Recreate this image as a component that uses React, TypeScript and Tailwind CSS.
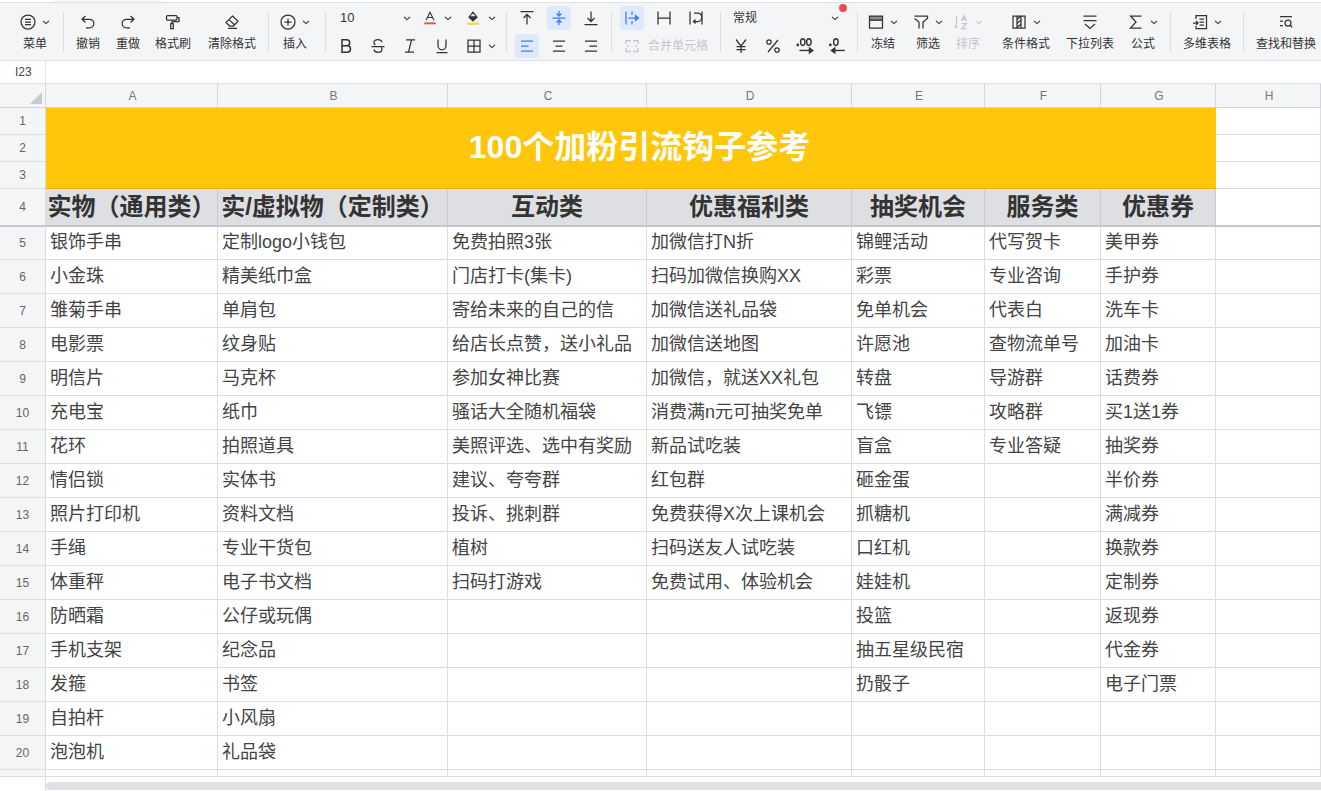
import React from "react";

const sheetRows: string[][] = [
  ["银饰手串", "定制logo小钱包", "免费拍照3张", "加微信打N折", "锦鲤活动", "代写贺卡", "美甲券"],
  ["小金珠", "精美纸巾盒", "门店打卡(集卡)", "扫码加微信换购XX", "彩票", "专业咨询", "手护券"],
  ["雏菊手串", "单肩包", "寄给未来的自己的信", "加微信送礼品袋", "免单机会", "代表白", "洗车卡"],
  ["电影票", "纹身贴", "给店长点赞，送小礼品", "加微信送地图", "许愿池", "查物流单号", "加油卡"],
  ["明信片", "马克杯", "参加女神比赛", "加微信，就送XX礼包", "转盘", "导游群", "话费券"],
  ["充电宝", "纸巾", "骚话大全随机福袋", "消费满n元可抽奖免单", "飞镖", "攻略群", "买1送1券"],
  ["花环", "拍照道具", "美照评选、选中有奖励", "新品试吃装", "盲盒", "专业答疑", "抽奖券"],
  ["情侣锁", "实体书", "建议、夸夸群", "红包群", "砸金蛋", "", "半价券"],
  ["照片打印机", "资料文档", "投诉、挑刺群", "免费获得X次上课机会", "抓糖机", "", "满减券"],
  ["手绳", "专业干货包", "植树", "扫码送友人试吃装", "口红机", "", "换款券"],
  ["体重秤", "电子书文档", "扫码打游戏", "免费试用、体验机会", "娃娃机", "", "定制券"],
  ["防晒霜", "公仔或玩偶", "", "", "投篮", "", "返现券"],
  ["手机支架", "纪念品", "", "", "抽五星级民宿", "", "代金券"],
  ["发箍", "书签", "", "", "扔骰子", "", "电子门票"],
  ["自拍杆", "小风扇", "", "", "", "", ""],
  ["泡泡机", "礼品袋", "", "", "", "", ""],
  ["", "", "", "", "", "", ""],
];

const columns = ["A", "B", "C", "D", "E", "F", "G", "H"];
const heads = ["实物（通用类）", "实/虚拟物（定制类）", "互动类", "优惠福利类", "抽奖机会", "服务类", "优惠券"];

const Svg = ({ children, size = 18 }: { children: React.ReactNode; size?: number }) => (
  <svg
    width={size}
    height={size}
    viewBox="0 0 18 18"
    fill="none"
    stroke="currentColor"
    strokeWidth="1.25"
    className="shrink-0"
  >
    {children}
  </svg>
);

const Chevron = () => (
  <svg width="10" height="10" viewBox="0 0 10 10" fill="none" stroke="currentColor" strokeWidth="1.1" className="shrink-0">
    <path d="M2 3.8 5 6.6 8 3.8" />
  </svg>
);

const Divider = () => <div className="w-px h-[40px] mt-[9px] bg-[#dcdee2] shrink-0" />;

const ToolItem = ({
  w,
  label,
  icon,
  chevron,
  disabled,
}: {
  w: string;
  label: string;
  icon: React.ReactNode;
  chevron?: boolean;
  disabled?: boolean;
}) => (
  <div className={`${w} shrink-0 flex flex-col items-center pt-[10px] ${disabled ? "text-[#c4c6cb]" : "text-[#333]"}`}>
    <div className="flex items-center h-[18px]">
      {icon}
      {chevron && (
        <span className="ml-[4px]">
          <Chevron />
        </span>
      )}
    </div>
    <span className="text-[12px] leading-[16px] mt-[5px] whitespace-nowrap">{label}</span>
  </div>
);

const Btn = ({ children, active, w = "w-[24px]" }: { children: React.ReactNode; active?: boolean; w?: string }) => (
  <div
    className={`${w} h-[24px] shrink-0 flex items-center justify-center rounded ${
      active ? "bg-[#dfe9fd] text-[#3c7bf6]" : "text-[#333]"
    }`}
  >
    {children}
  </div>
);

const Toolbar = () => (
  <div className="h-[58px] bg-[#f4f5f7] border-b border-[#dfe0e3] flex pl-[7px] overflow-hidden shrink-0">
    <ToolItem
      w="w-[56px]"
      label="菜单"
      chevron
      icon={
        <Svg>
          <circle cx="9" cy="9" r="7" />
          <path d="M6 6.3h6M6 9h6M6 11.7h6" />
        </Svg>
      }
    />
    <Divider />
    <ToolItem
      w="w-[48px]"
      label="撤销"
      icon={
        <Svg>
          <path d="M6.5 3 3 6.3l3.5 3.2M3.2 6.3h7.3a4.3 4.3 0 0 1 0 8.6H7" />
        </Svg>
      }
    />
    <ToolItem
      w="w-[32px]"
      label="重做"
      icon={
        <Svg>
          <path d="M11.5 3 15 6.3l-3.5 3.2M14.8 6.3H7.5a4.3 4.3 0 0 0 0 8.6H11" />
        </Svg>
      }
    />
    <ToolItem
      w="w-[58px]"
      label="格式刷"
      icon={
        <Svg>
          <path d="M3.5 2.500h8.500a1 1 0 0 1 1 1v2.500a1 1 0 0 1-1 1H3.500a1 1 0 0 1-1-1V3.500a1 1 0 0 1 1-1zM13 4.500h2v4.200H8v2M6.700 10.700h2.600v5H6.700z" />
        </Svg>
      }
    />
    <ToolItem
      w="w-[60px]"
      label="清除格式"
      icon={
        <Svg>
          <path d="M9.5 3 15 8.2 10.3 13H6.7L3 9.4zM6 6.6l5.4 5.1M5 15.3h9" />
        </Svg>
      }
    />
    <div className="w-[6px] shrink-0" />
    <Divider />
    <ToolItem
      w="w-[52px]"
      label="插入"
      chevron
      icon={
        <Svg>
          <circle cx="9" cy="9" r="7" />
          <path d="M9 5.5v7M5.5 9h7" />
        </Svg>
      }
    />
    <div className="w-[4px] shrink-0" />
    <Divider />

    {/* font */}
    <div className="w-[180px] shrink-0 flex flex-col gap-[4px] pt-[3px] text-[#333]">
      <div className="h-[24px] flex items-center pl-[14px]">
        <span className="w-[62px] text-[13px]">10</span>
        <Chevron />
        <span className="ml-[10px]">
          <Svg size={16}>
            <path d="M4.5 11.5 9 2.5l4.5 9M6 8.5h6" />
            <path d="M2.5 15h13" stroke="#e8504a" strokeWidth="2.2" />
          </Svg>
        </span>
        <span className="ml-[5px]">
          <Chevron />
        </span>
        <span className="ml-[12px]">
          <Svg size={16}>
            <path d="M9 2.5 13.5 8 9 12 4.5 8zM5 8h8" />
            <path d="M5.5 8.5 9 12l4-3.8-.6-.4H5.5z" fill="currentColor" />
            <path d="M2.5 15.5h13" stroke="#f5d547" strokeWidth="2.4" />
          </Svg>
        </span>
        <span className="ml-[6px]">
          <Chevron />
        </span>
      </div>
      <div className="h-[24px] flex items-center pl-[4px]">
        <Btn w="w-[32px]">
          <Svg>
            <path strokeWidth="1.5" d="M5 2.800h4.700a3 3 0 0 1 0 6H5zM5 8.800h5.300a3.200 3.200 0 0 1 0 6.400H5z" />
          </Svg>
        </Btn>
        <Btn w="w-[32px]">
          <Svg>
            <path d="M13 5c-.6-1.500-2-2.300-4-2.300-2.200 0-4 1-4 3 0 1 .5 1.800 1.500 2.300M5 12.500c.5 1.800 2 2.800 4 2.800 2.300 0 4-1.200 4-3 0-.8-.3-1.400-.8-1.800M2.500 9.500h13" />
          </Svg>
        </Btn>
        <Btn w="w-[32px]">
          <Svg>
            <path d="M5 2.800h9M4 15.200h9M10.500 2.800l-3 12.400" />
          </Svg>
        </Btn>
        <Btn w="w-[32px]">
          <Svg>
            <path d="M5 2.500v6.300a4 4 0 0 0 8 0V2.500M3.500 15.500h11" />
          </Svg>
        </Btn>
        <Btn w="w-[32px]">
          <Svg>
            <path d="M3 3h12v12H3zM9 3v12M3 9h12" />
          </Svg>
        </Btn>
        <span className="-ml-[3px]">
          <Chevron />
        </span>
      </div>
    </div>
    <Divider />

    {/* align */}
    <div className="w-[104px] shrink-0 flex flex-col gap-[4px] pt-[3px] px-[8px]">
      <div className="flex gap-[8px]">
        <Btn>
          <Svg>
            <path d="M2.500 2.500h13M9 5.500v10M5.500 9 9 5.500 12.500 9" />
          </Svg>
        </Btn>
        <Btn active>
          <Svg>
            <path d="M2.500 9h13M9 2v5M6.500 4.500 9 7l2.500-2.500M9 16v-5M6.500 13.500 9 11l2.500 2.500" />
          </Svg>
        </Btn>
        <Btn>
          <Svg>
            <path d="M2.500 15.500h13M9 2.500v10M5.500 9 9 12.500 12.500 9" />
          </Svg>
        </Btn>
      </div>
      <div className="flex gap-[8px]">
        <Btn active>
          <Svg>
            <path d="M3 4h12M3 9h7.500M3 14h12" />
          </Svg>
        </Btn>
        <Btn>
          <Svg>
            <path d="M3 4h12M5.500 9h7M3 14h12" />
          </Svg>
        </Btn>
        <Btn>
          <Svg>
            <path d="M3 4h12M7.500 9H15M3 14h12" />
          </Svg>
        </Btn>
      </div>
    </div>
    <Divider />

    {/* wrap / merge */}
    <div className="w-[108px] shrink-0 flex flex-col gap-[4px] pt-[3px] pl-[8px]">
      <div className="flex gap-[8px]">
        <Btn active>
          <Svg>
            <path d="M3 2.500v13M9 2.500v3.500M9 12v3.500M5.500 9h9" />
            <path d="M12.500 6.500 15.500 9l-3 2.500z" fill="currentColor" />
          </Svg>
        </Btn>
        <Btn>
          <Svg>
            <path d="M3 2.500v13M15 2.500v13M3 9h12" />
          </Svg>
        </Btn>
        <Btn>
          <Svg>
            <path d="M3 2.500v13M15 2.500v13M7 4h3.500a2.500 2.500 0 0 1 0 8.500H6.500M8.500 10.500l-2 2 2 2" />
          </Svg>
        </Btn>
      </div>
      <div className="flex items-center text-[#c4c6cb]">
        <Btn>
          <span className="text-[#c4c6cb]">
            <Svg>
              <path d="M7 5V3.500H3V7M3 11v3.500h4V13M11 5V3.500h4V7M15 11v3.500h-4V13M5 8v2M13 8v2" />
            </Svg>
          </span>
        </Btn>
        <span className="ml-[4px] text-[12px] whitespace-nowrap">合并单元格</span>
      </div>
    </div>
    <Divider />

    {/* number format */}
    <div className="relative w-[136px] shrink-0 flex flex-col gap-[4px] pt-[3px] text-[#333]">
      <div className="h-[24px] flex items-center pl-[12px] pr-[17px] justify-between">
        <span className="text-[12px]">常规</span>
        <Chevron />
      </div>
      <div className="flex gap-[8px] pl-[8px]">
        <Btn>
          <Svg>
            <path d="M4 2.500 9 9l5-6.500M9 9v7M4.500 9.500h9M4.500 12.500h9" />
          </Svg>
        </Btn>
        <Btn>
          <Svg>
            <path d="M14 3 4 15" />
            <circle cx="5" cy="5" r="2.200" />
            <circle cx="13" cy="13" r="2.200" />
          </Svg>
        </Btn>
        <Btn>
          <Svg size={20}>
            <circle cx="2.500" cy="8" r=".6" fill="currentColor" />
            <ellipse cx="7" cy="5.500" rx="2" ry="3" />
            <ellipse cx="12.500" cy="5.500" rx="2" ry="3" />
            <path d="M4 13h10" />
            <path d="M13 10.800 16 13l-3 2.200z" fill="currentColor" />
          </Svg>
        </Btn>
        <Btn>
          <Svg size={20}>
            <circle cx="3" cy="8" r=".6" fill="currentColor" />
            <ellipse cx="8" cy="5.500" rx="2" ry="3" />
            <path d="M6 13h10" />
            <path d="M7 10.800 4 13l3 2.200z" fill="currentColor" />
          </Svg>
        </Btn>
      </div>
      <span className="absolute left-[118px] top-[1px] w-[8px] h-[8px] rounded-full bg-[#f54a45]" />
    </div>
    <Divider />

    <ToolItem
      w="w-[50px]"
      label="冻结"
      chevron
      icon={
        <Svg>
          <path d="M2.500 3h13v12h-13zM2.500 7h13" />
          <path d="M3 3.500h12V7H3z" fill="currentColor" opacity=".55" />
        </Svg>
      }
    />
    <ToolItem
      w="w-[40px]"
      label="筛选"
      chevron
      icon={
        <Svg>
          <path d="M2.500 3h13v2.500L11 9v6.500M7 15.500V9L2.500 5.500" />
        </Svg>
      }
    />
    <ToolItem
      w="w-[40px]"
      label="排序"
      chevron
      disabled
      icon={
        <Svg>
          <path d="M4.500 3v12M2.500 13l2 2M9.500 8 12 2.500 14.500 8M10.500 6.300h3M9.800 10.500h4.600l-4.600 5h4.700" />
        </Svg>
      }
    />
    <ToolItem
      w="w-[76px]"
      label="条件格式"
      chevron
      icon={
        <Svg>
          <path d="M3 3h12v12H3zM7 3v12M11 3v12" />
          <path d="M7 6.500 11 3M7 10.500l4-3.500M7 14.500l4-3.500" />
        </Svg>
      }
    />
    <ToolItem
      w="w-[52px]"
      label="下拉列表"
      icon={
        <Svg>
          <path d="M2.500 3h13M2.500 7.500h13M4 11l5 4.500 5-4.500" />
        </Svg>
      }
    />
    <ToolItem
      w="w-[54px]"
      label="公式"
      chevron
      icon={
        <Svg>
          <path d="M14.500 3h-11l5.500 6-5.500 6h11" />
        </Svg>
      }
    />
    <Divider />
    <ToolItem
      w="w-[72px]"
      label="多维表格"
      chevron
      icon={
        <Svg>
          <path d="M5 6V2.500h10.500v13H5V13M8.500 6h4.500M8.500 9h4.500M8.500 12h4.500M2 10h5M5 8l2 2-2 2" />
        </Svg>
      }
    />
    <Divider />
    <ToolItem
      w="w-[84px]"
      label="查找和替换"
      icon={
        <Svg>
          <path d="M3 3.500h12M3 8h3M3 12.500h3" />
          <circle cx="11" cy="10" r="3" />
          <path d="m13.200 12.200 2 2" />
        </Svg>
      }
    />
  </div>
);

const FormulaBar = () => (
  <div className="h-[23px] bg-white border-b border-[#dfe0e3] flex shrink-0">
    <div className="w-[46px] border-r border-[#e4e5e8] text-[12px] text-[#444] pl-[15px] leading-[22px]">I23</div>
  </div>
);

const Sheet = () => (
  <div className="flex-1 min-h-0 overflow-hidden">
    <div className="grid grid-cols-[46px_172px_230px_199px_205px_133px_116px_115px_105px] grid-rows-[24px_27px_27px_27px_38px_33px_repeat(15,34px)_7px] text-[#333]">
      {/* column headers */}
      <div className="relative bg-[#f4f5f7] border-r border-b border-[#d3d5d9]">
        <div className="absolute right-[3px] bottom-[3px] w-0 h-0 border-l-[12px] border-l-transparent border-b-[12px] border-b-[#c9cbd0]" />
      </div>
      {columns.map((c) => (
        <div
          key={c}
          className="bg-[#f4f5f7] border-r border-b border-[#d3d5d9] flex items-center justify-center pl-[2px] text-[12px] text-[#777]"
        >
          {c}
        </div>
      ))}

      {/* rows 1-3: merged title */}
      {[1, 2, 3].map((n) => (
        <React.Fragment key={n}>
          <div className="col-start-1 bg-[#f4f5f7] border-r border-b border-[#dcdde0] flex items-center justify-center text-[12px] text-[#666]">
            {n}
          </div>
          <div className="col-start-9 border-r border-b border-[#dcdde0]" />
        </React.Fragment>
      ))}
      <div className="col-start-2 col-span-7 row-start-2 row-span-3 bg-[#ffc60a] border-b border-[#e3b012] flex items-center justify-center pl-[17px] pb-[2px] text-white text-[32px] font-bold">
        100个加粉引流钩子参考
      </div>

      {/* row 4 */}
      <div className="bg-[#f4f5f7] border-r border-b-2 border-r-[#dcdde0] border-b-[#c5c7cc] flex items-center justify-center text-[12px] text-[#666]">
        4
      </div>
      {heads.map((h) => (
        <div
          key={h}
          className="bg-[#dedfe3] border-r border-b-2 border-r-[#c9cbd0] border-b-[#c5c7cc] flex items-center justify-center text-[24px] leading-none font-bold whitespace-nowrap"
        >
          {h}
        </div>
      ))}
      <div className="border-r border-b-2 border-r-[#dcdde0] border-b-[#c5c7cc]" />

      {/* body */}
      {sheetRows.map((row, i) => (
        <React.Fragment key={i}>
          <div className="bg-[#f4f5f7] border-r border-b border-[#dcdde0] flex items-center justify-center text-[12px] text-[#666]">
            {i < 16 ? i + 5 : ""}
          </div>
          {[...row, ""].map((cell, j) => (
            <div
              key={j}
              className="border-r border-b border-[#dcdde0] flex items-center pl-[4px] pb-[2px] text-[18px] leading-none text-[#444] whitespace-nowrap overflow-hidden"
            >
              {cell}
            </div>
          ))}
        </React.Fragment>
      ))}
    </div>
  </div>
);

export default function App() {
  return (
    <div className="w-[1321px] h-[791px] overflow-hidden bg-white flex flex-col font-['Liberation_Sans','Noto_Sans_CJK_SC',sans-serif]">
      <div className="h-[3px] shrink-0 bg-white border-b border-[#dfe0e3] flex">
        <div className="ml-[54px] w-[107px] bg-[#f4f5f7]" />
      </div>
      <Toolbar />
      <FormulaBar />
      <Sheet />
      <div className="h-[14px] shrink-0 flex pt-[5px] bg-white">
        <div className="w-[46px] -mt-[5px] border-r border-[#dcdde0]" />
        <div className="flex-1 h-[8px] bg-[#dfe0e4] rounded-l" />
      </div>
    </div>
  );
}
